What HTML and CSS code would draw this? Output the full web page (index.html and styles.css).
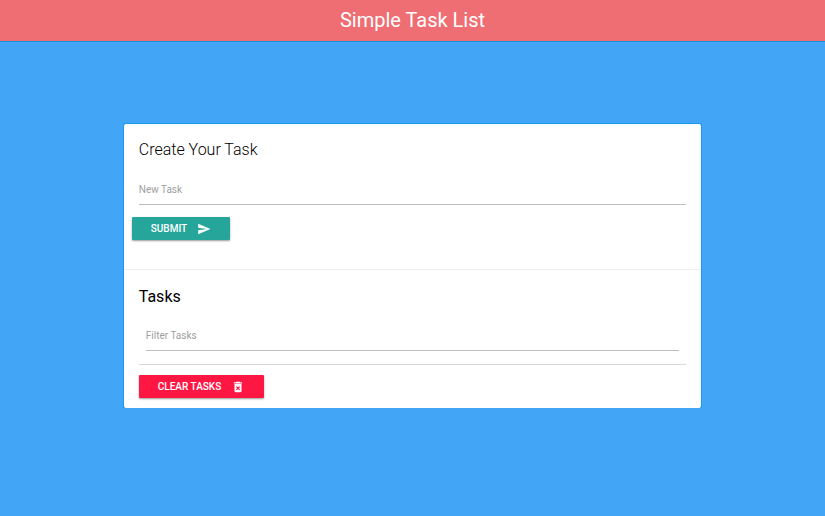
FILE: index.html
```html
<!DOCTYPE html>
<html lang="en">
<head>
<meta charset="utf-8">
<meta name="viewport" content="width=device-width, initial-scale=1">
<title>Simple Task List</title>
<link rel="stylesheet" href="styles.css">
</head>
<body>
<header class="navbar"><h1 class="brand">Simple Task List</h1></header>
<main class="card">
  <section class="card-content">
    <h2 class="card-title light">Create Your Task</h2>
    <form class="task-form">
      <div class="field">
        <label for="task">New Task</label>
        <input id="task" type="text">
      </div>
      <button class="btn submit" type="submit">Submit
        <svg class="icon" viewBox="0 0 24 24" aria-hidden="true"><path d="M2.01 21L23 12 2.01 3 2 10l15 2-15 2z"/></svg>
      </button>
    </form>
  </section>
  <section class="card-action">
    <h2 class="card-title">Tasks</h2>
    <div class="field filter">
      <label for="filter">Filter Tasks</label>
      <input id="filter" type="text">
    </div>
    <ul class="collection"></ul>
    <button class="btn clear" type="button">Clear Tasks
      <svg class="icon" viewBox="0 0 24 24" aria-hidden="true"><path fill-rule="evenodd" d="M6 19c0 1.100.9 2 2 2h8c1.100 0 2-.9 2-2V7H6zM8.500 11.900l1.400-1.400L12 12.600l2.100-2.100 1.400 1.400-2.100 2.100 2.100 2.100-1.400 1.400L12 15.400l-2.100 2.100-1.400-1.400 2.100-2.100zM15.500 4l-1-1h-5l-1 1H5v2h14V4z"/></svg>
    </button>
  </section>
</main>
</body>
</html>
```

FILE: styles.css
```css
* {
  box-sizing: border-box;
}

body {
  margin: 0;
  background: #42a5f5;
  color: #000;
  font-family: Roboto, "Liberation Sans", sans-serif;
}

.navbar {
  display: flex;
  justify-content: center;
  background: #ee6e73;
  box-shadow: 0 1px 0 #1a8fdc;
}

.brand {
  margin: 0;
  color: #fff;
  font-size: 20px;
  font-weight: 400;
  line-height: 41px;
}

.card {
  width: 70%;
  margin: 83px auto 0;
  border-radius: 2px;
  background: #fff;
  box-shadow: 0 1px 0 #0f80cf, 0 0 0 1px #149cf5;
}

.card-content {
  padding: 16px 15px 29px;
}

.card-action {
  padding: 17px 15px 10px;
  border-top: 1px solid #eee;
}

.card-title {
  margin: 0;
  font-size: 16px;
  font-weight: 400;
  line-height: 20px;
}

.light {
  font-weight: 300;
}

.field {
  position: relative;
  margin-top: 16px;
}

.field label {
  position: absolute;
  top: 6px;
  left: 0;
  color: #9e9e9e;
  font-size: 10px;
  line-height: 16px;
}

.field input {
  display: block;
  width: 100%;
  height: 29px;
  padding: 0;
  border: 0;
  border-bottom: 1px solid #bdbdbd;
  outline: 0;
  background: transparent;
  font: inherit;
  font-size: 10px;
}

.filter {
  margin: 15px 7px 0;
}

.collection {
  height: 1px;
  margin: 13px 0 10px;
  padding: 0;
  background: #d8d8d8;
}

.btn {
  display: flex;
  align-items: center;
  gap: 10px;
  height: 23px;
  padding: 0 19px;
  border: 0;
  border-radius: 1px;
  color: #fff;
  font: 500 10px/23px Roboto, "Liberation Sans", sans-serif;
  text-transform: uppercase;
  box-shadow: 0 1px 2px rgba(0, 0, 0, 0.4);
}

.submit {
  margin: 12px 0 0 -7px;
  background: #26a69a;
}

.clear {
  background: #ff1744;
}

.icon {
  width: 14px;
  height: 14px;
  fill: currentColor;
}
```
